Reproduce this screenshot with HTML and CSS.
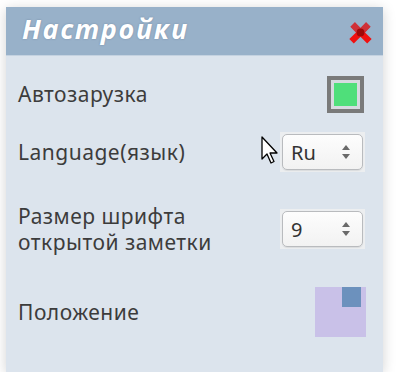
FILE: index.html
```html
<!DOCTYPE html>
<html lang="ru">
<head>
    <meta charset="UTF-8">
    <title>Настройки</title>
    <link rel="stylesheet" href="styles.css">
</head>
<body>
    <div class="panel">
        <div class="panel-head">
            <span class="title">Настройки</span>
            <svg class="close" width="29" height="29" viewBox="0 0 26 26">
                <path d="M4 7 L8 3 L13 8 L18 3 L22 7 L17 12 L23 18 L19 22 L13 16 L7 22 L3 18 L9 12 Z" fill="#f01010"/>
                <path d="M4 7 L8 3 L13 8 L18 3 L22 7 L17 12 L13 12 L9 12 Z" fill="#c0404a" opacity="0.7"/>
                <circle cx="13" cy="12" r="3.5" fill="#a00808"/>
            </svg>
        </div>
        <div class="panel-body">
            <div class="row">
                <span class="label">Автозарузка</span>
                <span class="check"><span class="check-fill"></span></span>
            </div>
            <div class="row r2">
                <span class="label">Language(язык)</span>
                <span class="spin-wrap">
                    <span class="spin"><span class="spin-val">Ru</span><span class="arrows"><i class="up"></i><i class="down"></i></span></span>
                </span>
            </div>
            <div class="row r3">
                <span class="label">Размер шрифта<br>открытой заметки</span>
                <span class="spin-wrap">
                    <span class="spin"><span class="spin-val">9</span><span class="arrows"><i class="up"></i><i class="down"></i></span></span>
                </span>
            </div>
            <div class="row r4">
                <span class="label">Положение</span>
                <span class="pos"><span class="pos-mark"></span></span>
            </div>
        </div>
    </div>
    <svg class="cursor" width="18" height="30" viewBox="0 0 18 30">
        <path d="M1 1 L1 23 L6 18 L10 27 L13 25.5 L9 17 L16 17 Z" fill="#fff" stroke="#000" stroke-width="1.3" stroke-linejoin="round"/>
    </svg>
</body>
</html>
```

FILE: styles.css
```css
body {
    margin: 0;
    background: #fff;
    font-family: "Noto Sans", "Open Sans", sans-serif;
    position: relative;
}
.panel {
    margin: 7px 0 0 6px;
    width: 377px;
    height: 365px;
    background: #dce4ed;
    box-shadow: 0 2px 12px rgba(0,0,0,0.18);
}
.panel-head {
    height: 48px;
    background: #98b1c9;
    border-bottom: 1px solid #c4d2e0;
    display: flex;
    align-items: center;
    justify-content: space-between;
    padding: 0 8px 0 16px;
}
.title {
    color: #fff;
    font-family: "Open Sans", sans-serif;
    font-weight: bold;
    font-style: italic;
    font-size: 27px;
    letter-spacing: 1.6px;
    text-shadow: 0 0 2px rgba(60,80,110,0.4);
    margin-top: -6px;
}
.close {
    margin-top: 4px;
}
.panel-body {
    padding: 18px 18px 0 12px;
}
.row {
    display: flex;
    align-items: center;
    justify-content: space-between;
    height: 40px;
}
.r2 { margin-top: 18px; }
.r3 { margin-top: 37px; }
.r4 { margin-top: 38px; height: 50px; }
.label {
    color: #3c3c3c;
    font-size: 21px;
    line-height: 26px;
    letter-spacing: 0.5px;
}
.check {
    border: 4px solid #7a7a7a;
    background: #d6dadf;
    padding: 3px;
    margin-right: 1px;
    width: 23px;
    height: 23px;
}
.check-fill {
    display: block;
    width: 100%;
    height: 100%;
    background: #4fdf7a;
}
.spin-wrap {
    background: #eceef0;
    padding: 2px;
}
.spin {
    display: flex;
    align-items: center;
    justify-content: space-between;
    border: 1px solid #b9bbbe;
    border-radius: 5px;
    background: linear-gradient(#fdfdfd, #f2f2f2);
    box-shadow: 0 1px 1px rgba(0,0,0,0.08);
    padding: 0 12px 0 8px;
    box-sizing: border-box;
    width: 81px;
    height: 36px;
}
.spin-val {
    font-size: 20px;
    color: #333;
}
.arrows {
    display: flex;
    flex-direction: column;
    gap: 4px;
}
.arrows i {
    width: 0;
    height: 0;
    border-left: 4px solid transparent;
    border-right: 4px solid transparent;
}
.arrows .up { border-bottom: 5px solid #6a6a6a; }
.arrows .down { border-top: 5px solid #6a6a6a; }
.pos {
    width: 51px;
    height: 50px;
    background: #c9c1e8;
    display: flex;
    justify-content: flex-end;
    margin-right: -1px;
}
.pos-mark {
    width: 19px;
    height: 20px;
    background: #6c91bd;
    margin-right: 5px;
}
.cursor {
    position: absolute;
    left: 261px;
    top: 136px;
}
```
